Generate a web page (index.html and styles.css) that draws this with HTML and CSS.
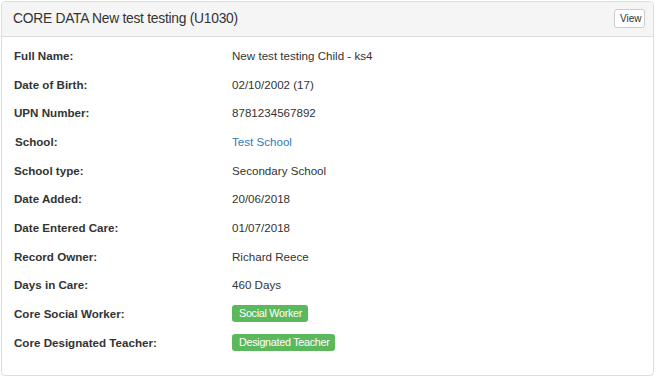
FILE: index.html
```
<!DOCTYPE html>
<html lang="en">
<head>
    <meta charset="UTF-8">
    <meta name="viewport" content="width=device-width, initial-scale=1.0">
    <title>Core Data</title>
    <link rel="stylesheet" href="styles.css">
</head>
<body>
    <div class="panel">
        <div class="panel-heading">
            <span class="panel-title">CORE DATA New test testing (U1030)</span>
            <button class="btn-view">View</button>
        </div>
        <div class="panel-body">
            <div class="row"><div class="label">Full Name:</div><div class="value">New test testing Child - ks4</div></div>
            <div class="row"><div class="label">Date of Birth:</div><div class="value">02/10/2002 (17)</div></div>
            <div class="row"><div class="label">UPN Number:</div><div class="value">8781234567892</div></div>
            <div class="row"><div class="label school">School:</div><div class="value"><a href="#">Test School</a></div></div>
            <div class="row"><div class="label">School type:</div><div class="value">Secondary School</div></div>
            <div class="row"><div class="label">Date Added:</div><div class="value">20/06/2018</div></div>
            <div class="row"><div class="label">Date Entered Care:</div><div class="value">01/07/2018</div></div>
            <div class="row"><div class="label">Record Owner:</div><div class="value">Richard Reece</div></div>
            <div class="row"><div class="label">Days in Care:</div><div class="value">460 Days</div></div>
            <div class="row"><div class="label">Core Social Worker:</div><div class="value"><span class="badge">Social Worker</span></div></div>
            <div class="row"><div class="label">Core Designated Teacher:</div><div class="value"><span class="badge">Designated Teacher</span></div></div>
        </div>
    </div>
</body>
</html>
```

FILE: styles.css
```
body {
    font-family: "Liberation Sans", Arial, sans-serif;
    font-size: 11.6px;
    color: #333;
    margin: 1px 4px 0 1px;
    background: #fff;
}
.panel {
    border: 1px solid #ddd;
    border-radius: 4px;
    box-shadow: 0 1px 1px rgba(0, 0, 0, 0.05);
    height: 375px;
    box-sizing: border-box;
}
.panel-heading {
    display: flex;
    align-items: center;
    justify-content: space-between;
    height: 34px;
    padding: 0 8px 0 11px;
    background-color: #f5f5f5;
    border-bottom: 1px solid #ddd;
    border-radius: 3px 3px 0 0;
}
.panel-title {
    font-size: 13.8px;
    letter-spacing: -0.25px;
    color: #333;
    padding-bottom: 2px;
}
.btn-view {
    font-family: "Liberation Sans", Arial, sans-serif;
    font-size: 10px;
    color: #333;
    background: #fff;
    border: 1px solid #ccc;
    border-radius: 3px;
    padding: 3px 5px;
    width: 31px;
    height: 19px;
    line-height: 11px;
    margin-bottom: 2px;
}
.panel-body {
    padding: 4px 12px 0 12px;
}
.row {
    display: flex;
    align-items: center;
    height: 28.7px;
}
.label {
    width: 218px;
    font-weight: bold;
}
.label.school {
    padding-left: 1px;
    width: 217px;
}
.value a {
    color: #337ab7;
    text-decoration: none;
}
.badge {
    display: inline-block;
    background-color: #5cb85c;
    color: #fff;
    border-radius: 3px;
    padding: 2px 6px 3px 7px;
    font-size: 10.8px;
    letter-spacing: -0.3px;
    line-height: 12px;
}
```
